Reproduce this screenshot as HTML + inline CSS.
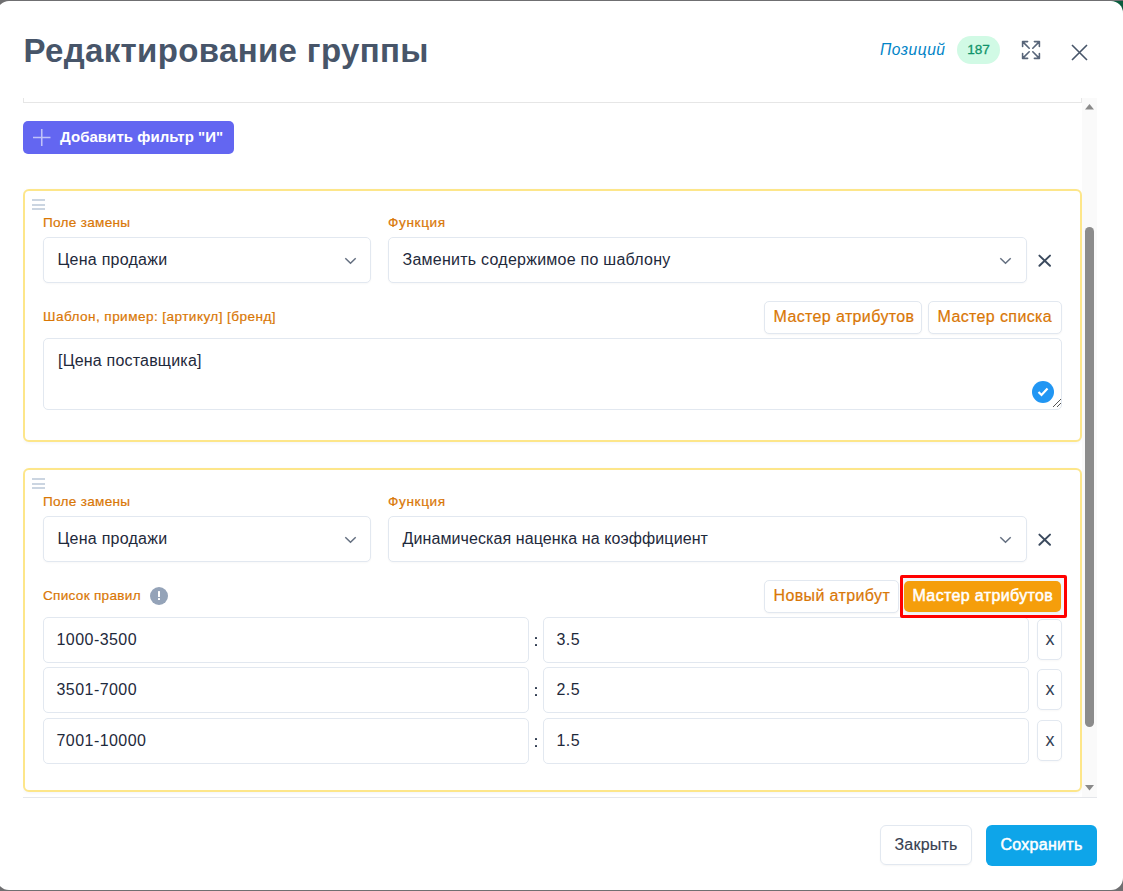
<!DOCTYPE html>
<html><head><meta charset="utf-8">
<style>
*{box-sizing:border-box;margin:0;padding:0}
html,body{width:1123px;height:891px;overflow:hidden;background:#6f6f71;font-family:"Liberation Sans",sans-serif}
.abs{position:absolute}
#green{left:1098px;top:1px;width:25px;height:22px;background:#0b5d3e}
#modal{left:-3px;top:1px;width:1126px;height:889px;background:#fff;border-radius:12px;overflow:hidden}
#m{position:absolute;left:3px;top:-1px;width:1123px;height:891px}
.title{left:23.5px;top:31px;font-size:33px;font-weight:700;color:#475569;letter-spacing:0.35px;line-height:40px;white-space:nowrap}
.pos{left:880px;top:40.6px;font-size:15.6px;font-style:italic;color:#0284c7;line-height:18px;letter-spacing:0.5px}
.badge{left:957px;top:36px;width:43px;height:28px;border-radius:14px;background:#d1fae5;color:#10936a;font-size:13.6px;line-height:27.4px;text-align:center;letter-spacing:0px;-webkit-text-stroke:0.3px #10936a}
.scroll{left:23px;top:98px;width:1074px;height:700px;border-bottom:1px solid #e5e7eb;overflow:hidden}
.track{left:1059px;top:0;width:15px;height:699px;background:#fafafa}
.thumb{left:3px;top:129px;width:9px;height:500px;border-radius:5px;background:#8c8c8c}
.prev{left:0;top:-20px;width:1059px;height:25px;border:1px solid #e6e6e6;border-top:none}
.addbtn{left:0;top:23px;width:211px;height:33px;border-radius:5px;background:#6366f1;color:#fff;font-size:15px;font-weight:700;line-height:33px;white-space:nowrap}
.card{left:0;width:1059px;border:2px solid #fde68a;border-radius:6px;background:#fff;box-shadow:0 1px 3px rgba(40,70,160,.06)}
.drag{left:7px;width:13px;height:11px}
.drag i{position:absolute;left:0;width:13px;height:2px;background:#cbd5e1}
.lbl{font-size:13.6px;color:#d97706;line-height:16px;white-space:nowrap;letter-spacing:0.28px;-webkit-text-stroke:0.2px #d97706}
.sel{height:46px;border:1px solid #e2e8f0;border-radius:5px;background:#fff;box-shadow:0 1px 2px rgba(0,0,0,.03);font-size:16px;color:#1e293b;line-height:44px;padding-left:13.5px;white-space:nowrap;letter-spacing:0.25px}
.obtn{height:32.5px;-webkit-text-stroke:0.2px #d97706;border:1px solid #e2e8f0;border-radius:5px;background:#fff;box-shadow:0 1px 2px rgba(0,0,0,.04);font-size:16px;color:#d97706;line-height:30px;padding-left:8.5px;white-space:nowrap;letter-spacing:0.38px}
.ta{border:1px solid #e2e8f0;border-radius:5px;background:#fff;font-size:16px;color:#1e293b;padding:13px 0 0 14px;line-height:18px;letter-spacing:0.2px}
.inp{height:46px;border:1px solid #e2e8f0;border-radius:5px;background:#fff;font-size:16px;color:#1e293b;line-height:44px;padding-left:12.5px;white-space:nowrap;letter-spacing:0.45px}
.xb{width:25px;height:41px;border:1px solid #e2e8f0;border-radius:5px;background:#fff;font-size:18px;color:#334155;line-height:39px;text-align:center;text-indent:1px;box-shadow:0 1px 2px rgba(0,0,0,.03)}
.colon{width:10px;font-size:15px;color:#1e293b;line-height:46px;text-align:center}
.fbtn{top:825px;height:40px;border-radius:6px;font-size:15px;line-height:40px;text-align:center;white-space:nowrap}
</style></head><body>
<div id="green" class="abs"></div>
<div id="modal" class="abs"><div id="m">
  <div class="abs title">Редактирование группы</div>
  <div class="abs pos">Позиций</div>
  <div class="abs badge">187</div>
  <svg class="abs" style="left:1020px;top:39px" width="22" height="22" viewBox="0 0 22 22" fill="none" stroke="#586579" stroke-width="1.6" stroke-linecap="round" stroke-linejoin="round">
    <path d="M2.6 7.4V2.6h5M2.6 2.6l6.6 6.6"/><path d="M19.4 7.4V2.6h-5M19.4 2.6l-6.6 6.6"/><path d="M2.6 14.6v4.8h5M2.6 19.4l6.6-6.6"/><path d="M19.4 14.6v4.8h-5M19.4 19.4l-6.6-6.6"/>
  </svg>
  <svg class="abs" style="left:1071px;top:44px" width="17" height="17" viewBox="0 0 17 17" fill="none" stroke="#475569" stroke-width="1.6">
    <path d="M1 1L16 16M16 1L1 16"/>
  </svg>

  <div class="abs scroll">
    <div class="abs prev"></div>
    <div class="abs addbtn">
      <svg class="abs" style="left:10px;top:8px" width="17.5" height="17" viewBox="0 0 17.5 17" stroke="rgba(255,255,255,.6)" stroke-width="1.6"><path d="M8.75 0v17M0 8.5h17.5"/></svg>
      <span class="abs" style="left:37px;top:-1px;letter-spacing:0.05px">Добавить фильтр "И"</span>
    </div>

    <!-- card 1 -->
    <div class="abs card" style="top:91px;height:253px">
      <div class="abs drag" style="top:8px"><i style="top:0"></i><i style="top:4.5px"></i><i style="top:9px"></i></div>
      <div class="abs lbl" style="left:18px;top:23.5px">Поле замены</div>
      <div class="abs sel" style="left:18px;top:46px;width:328px">Цена продажи
        <svg class="abs" style="left:300px;top:19px" width="13" height="8" viewBox="0 0 13 8" fill="none" stroke="#646f80" stroke-width="1.5"><path d="M1.3 1.2l5.2 5L11.7 1.2"/></svg>
      </div>
      <div class="abs lbl" style="left:363px;top:23.5px;letter-spacing:0.65px">Функция</div>
      <div class="abs sel" style="left:363px;top:46px;width:639px">Заменить содержимое по шаблону
        <svg class="abs" style="left:610px;top:19px" width="13" height="8" viewBox="0 0 13 8" fill="none" stroke="#646f80" stroke-width="1.5"><path d="M1.3 1.2l5.2 5L11.7 1.2"/></svg>
      </div>
      <svg class="abs" style="left:1012px;top:62px" width="15" height="15" viewBox="0 0 15 15" fill="none" stroke="#3b4a5e" stroke-width="2" stroke-linecap="round"><path d="M2.4 2.6L13 12.7M13 2.6L2.4 12.7"/></svg>
      <div class="abs lbl" style="left:18px;top:118px;letter-spacing:0.43px">Шаблон, пример: [артикул] [бренд]</div>
      <div class="abs obtn" style="left:739px;top:110px;width:158px">Мастер атрибутов</div>
      <div class="abs obtn" style="left:903px;top:110px;width:134px">Мастер списка</div>
      <div class="abs ta" style="left:18px;top:147px;width:1019px;height:72px">[Цена поставщика]
        <div class="abs" style="left:988px;top:42px;width:22px;height:22px;border-radius:11px;background:#2196f3">
          <svg class="abs" style="left:5px;top:6px" width="12" height="10" viewBox="0 0 12 10" fill="none" stroke="#fff" stroke-width="2.2"><path d="M1.5 5l3 3L10.5 1.5"/></svg>
        </div>
        <svg class="abs" style="left:1008px;top:59px" width="10" height="10" viewBox="0 0 10 10" stroke="#555" stroke-width="1"><path d="M9 1L1 9M9 5L5 9"/></svg>
      </div>
    </div>

    <!-- card 2 -->
    <div class="abs card" style="top:370px;height:324px">
      <div class="abs drag" style="top:8px"><i style="top:0"></i><i style="top:4.5px"></i><i style="top:9px"></i></div>
      <div class="abs lbl" style="left:18px;top:23.5px">Поле замены</div>
      <div class="abs sel" style="left:18px;top:46px;width:328px">Цена продажи
        <svg class="abs" style="left:300px;top:19px" width="13" height="8" viewBox="0 0 13 8" fill="none" stroke="#646f80" stroke-width="1.5"><path d="M1.3 1.2l5.2 5L11.7 1.2"/></svg>
      </div>
      <div class="abs lbl" style="left:363px;top:23.5px;letter-spacing:0.65px">Функция</div>
      <div class="abs sel" style="left:363px;top:46px;width:639px;letter-spacing:0.1px">Динамическая наценка на коэффициент
        <svg class="abs" style="left:610px;top:19px" width="13" height="8" viewBox="0 0 13 8" fill="none" stroke="#646f80" stroke-width="1.5"><path d="M1.3 1.2l5.2 5L11.7 1.2"/></svg>
      </div>
      <svg class="abs" style="left:1012px;top:62px" width="15" height="15" viewBox="0 0 15 15" fill="none" stroke="#3b4a5e" stroke-width="2" stroke-linecap="round"><path d="M2.4 2.6L13 12.7M13 2.6L2.4 12.7"/></svg>
      <div class="abs lbl" style="left:18px;top:118px">Список правил</div>
      <div class="abs" style="left:125px;top:117px;width:18px;height:18px;border-radius:9px;background:#94a3b8">
        <div class="abs" style="left:8px;top:3.8px;width:2.2px;height:6px;background:#fff;border-radius:0.5px"></div>
        <div class="abs" style="left:8px;top:11px;width:2.2px;height:2px;background:#fff;border-radius:0.5px"></div>
      </div>
      <div class="abs obtn" style="left:739px;top:110px;width:135px">Новый атрибут</div>
      <div class="abs" style="left:875px;top:105px;width:167px;height:43px;border:3px solid #ff0000;border-radius:2px;background:#f3f6fa;z-index:5"></div>
      <div class="abs obtn" style="left:879px;top:111px;width:157px;height:31px;border:none;background:#f59e0b;color:#fff;font-size:16px;line-height:29px;padding-left:8.5px;letter-spacing:0.36px;z-index:6;-webkit-text-stroke:0.5px #fff">Мастер атрибутов</div>

      <div class="abs inp" style="left:18px;top:147px;width:486px">1000-3500</div>
      <div class="abs" style="left:510px;top:167px;width:2.2px;height:2.2px;border-radius:0.6px;background:#2d3a4e"></div><div class="abs" style="left:510px;top:174px;width:2.2px;height:2.2px;border-radius:0.6px;background:#2d3a4e"></div>
      <div class="abs inp" style="left:518px;top:147px;width:486px">3.5</div>
      <div class="abs xb" style="left:1012px;top:149px">x</div>

      <div class="abs inp" style="left:18px;top:197px;width:486px">3501-7000</div>
      <div class="abs" style="left:510px;top:217px;width:2.2px;height:2.2px;border-radius:0.6px;background:#2d3a4e"></div><div class="abs" style="left:510px;top:224px;width:2.2px;height:2.2px;border-radius:0.6px;background:#2d3a4e"></div>
      <div class="abs inp" style="left:518px;top:197px;width:486px">2.5</div>
      <div class="abs xb" style="left:1012px;top:199px">x</div>

      <div class="abs inp" style="left:18px;top:248px;width:486px">7001-10000</div>
      <div class="abs" style="left:510px;top:268px;width:2.2px;height:2.2px;border-radius:0.6px;background:#2d3a4e"></div><div class="abs" style="left:510px;top:275px;width:2.2px;height:2.2px;border-radius:0.6px;background:#2d3a4e"></div>
      <div class="abs inp" style="left:518px;top:248px;width:486px">1.5</div>
      <div class="abs xb" style="left:1012px;top:250px">x</div>
    </div>

    <div class="abs track">
      <svg class="abs" style="left:3px;top:6px" width="9" height="6" viewBox="0 0 9 6"><path d="M4.5 0L9 5.5H0z" fill="#8a8a8a"/></svg>
      <div class="abs thumb"></div>
      <svg class="abs" style="left:3px;top:687px" width="9" height="6" viewBox="0 0 9 6"><path d="M0 0H9L4.5 5.5z" fill="#8a8a8a"/></svg>
    </div>
  </div>

  <div class="abs fbtn" style="left:880px;width:92px;border:1px solid #e2e8f0;color:#374151;line-height:38px;letter-spacing:0.2px;font-size:16px;-webkit-text-stroke:0.15px #374151;box-shadow:0 1px 2px rgba(0,0,0,.04)">Закрыть</div>
  <div class="abs fbtn" style="left:986px;width:111px;height:41px;background:#0ea5e9;color:#fff;font-size:16px;line-height:40px;letter-spacing:0.3px;-webkit-text-stroke:0.5px #fff">Сохранить</div>
</div></div>
</body></html>
